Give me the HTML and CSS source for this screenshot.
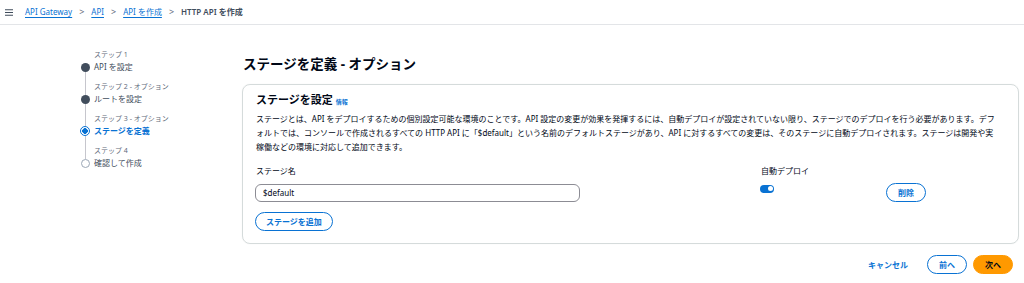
FILE: index.html
```html
<!DOCTYPE html>
<html lang="ja">
  <head>
    <meta charset="UTF-8" />
    <meta name="viewport" content="width=device-width, initial-scale=1.0" />
    <title>HTTP API を作成</title>
    <link rel="stylesheet" href="styles.css">
  </head>
  <body>
    <header class="topbar">
      <span class="menu-icon">
        <svg width="8" height="7" viewBox="0 0 8 7">
          <path d="M0 0.75H8M0 3.5H8M0 6.25H8" stroke="#414d5c" stroke-width="1.2" />
        </svg>
      </span>
      <nav class="breadcrumb">
        <a href="#">API Gateway</a>
        <span class="sep">&gt;</span>
        <a href="#">API</a>
        <span class="sep">&gt;</span>
        <a href="#">API を作成</a>
        <span class="sep">&gt;</span>
        <span class="current">HTTP API を作成</span>
      </nav>
    </header>

    <div class="layout">
      <ol class="steps">
        <li class="step done">
          <span class="rail"><i class="seg top"></i><i class="dot"></i><i class="seg bottom"></i></span>
          <span class="step-label">ステップ 1</span>
          <span class="step-title">API を設定</span>
        </li>
        <li class="step done">
          <span class="rail"><i class="seg top"></i><i class="dot"></i><i class="seg bottom"></i></span>
          <span class="step-label">ステップ 2 - オプション</span>
          <span class="step-title">ルートを設定</span>
        </li>
        <li class="step active">
          <span class="rail"><i class="seg top"></i><i class="dot"></i><i class="seg bottom"></i></span>
          <span class="step-label">ステップ 3 - オプション</span>
          <span class="step-title">ステージを定義</span>
        </li>
        <li class="step todo">
          <span class="rail"><i class="seg top"></i><i class="dot"></i><i class="seg bottom"></i></span>
          <span class="step-label">ステップ 4</span>
          <span class="step-title">確認して作成</span>
        </li>
      </ol>

      <main class="content">
        <h1>ステージを定義 - オプション</h1>

        <section class="card">
          <h2>ステージを設定 <a href="#" class="info">情報</a></h2>
          <p class="desc">
            ステージとは、API をデプロイするための個別設定可能な環境のことです。API 設定の変更が効果を発揮するには、自動デプロイが設定されていない限り、ステージでのデプロイを行う必要があります。デフォルトでは、コンソールで作成されるすべての HTTP API に「$default」という名前のデフォルトステージがあり、API に対するすべての変更は、そのステージに自動デプロイされます。ステージは開発や実稼働などの環境に対応して追加できます。
          </p>

          <div class="stage-grid">
            <label class="field-label" for="stage">ステージ名</label>
            <span class="field-label">自動デプロイ</span>
            <span></span>

            <input id="stage" class="text-input" type="text" value="$default" />
            <span class="toggle"><i></i></span>
            <button class="btn">削除</button>

            <button class="btn add">ステージを追加</button>
          </div>
        </section>

        <div class="actions">
          <button class="btn link">キャンセル</button>
          <button class="btn">前へ</button>
          <button class="btn primary">次へ</button>
        </div>
      </main>
    </div>
  </body>
</html>
```

FILE: styles.css
```css
* {
  box-sizing: border-box;
  margin: 0;
  padding: 0;
}

body {
  font-family: "Noto Sans", "Noto Sans CJK JP", sans-serif;
  color: #000716;
  background: #ffffff;
  font-size: 8px;
}

a {
  color: #0972d3;
}

/* top bar */
.topbar {
  height: 25px;
  display: flex;
  align-items: center;
  border-bottom: 1px solid #e3e5e8;
  padding-left: 5px;
}

.menu-icon {
  display: flex;
  width: 20px;
}

.breadcrumb {
  display: flex;
  align-items: center;
  font-size: 8px;
  line-height: 12px;
}

.breadcrumb a {
  text-decoration: underline;
  text-underline-offset: 2px;
}

.breadcrumb .sep {
  color: #5f6b7a;
  margin: 0 7px;
  font-size: 9px;
}

.breadcrumb .current {
  color: #414d5c;
  font-weight: 600;
}

/* layout */
.layout {
  display: flex;
  padding: 24px 5px 0 80px;
}

/* steps */
.steps {
  list-style: none;
  width: 162px;
  flex-shrink: 0;
}

.step {
  display: grid;
  grid-template-columns: 10px 1fr;
  grid-template-rows: 12px 12px 8px;
  column-gap: 4px;
}

.rail {
  grid-column: 1;
  grid-row: 1 / 4;
  display: flex;
  flex-direction: column;
  align-items: center;
}

.seg {
  width: 1px;
  background: #c6c6cd;
}

.seg.top {
  flex: 1;
}

.seg.bottom {
  height: 9px;
}

.step:first-child .seg.top,
.step:last-child .seg.bottom {
  background: transparent;
}

.dot {
  width: 9px;
  height: 9px;
  border-radius: 50%;
  flex-shrink: 0;
}

.done .dot {
  background: #414d5c;
}

.active .dot {
  width: 10px;
  height: 10px;
  border: 1.5px solid #0972d3;
  background: radial-gradient(circle, #0972d3 2.6px, #ffffff 3px);
}

.todo .dot {
  border: 1px solid #9ba7b6;
  background: #ffffff;
}

.step-label {
  grid-column: 2;
  grid-row: 1;
  font-size: 7px;
  line-height: 12px;
  color: #5f6b7a;
}

.step-title {
  grid-column: 2;
  grid-row: 2;
  font-size: 8px;
  line-height: 12px;
  color: #414d5c;
}

.active .step-title {
  color: #0972d3;
  font-weight: 700;
}

/* content */
.content {
  flex: 1;
}

h1 {
  font-size: 13.5px;
  line-height: 18px;
  font-weight: 700;
  margin: 6px 0 11px 1px;
}

.card {
  border: 1px solid #d5dbdb;
  border-radius: 8px;
  padding: 7px 14px 12px 12px;
  box-shadow: 0 0 1px rgba(0, 7, 22, 0.1);
}

h2 {
  font-size: 11px;
  line-height: 16px;
  font-weight: 700;
  margin-left: 1px;
}

.info {
  font-size: 6px;
  font-weight: 700;
  text-decoration: none;
}

.desc {
  max-width: 745px;
  font-size: 8px;
  line-height: 14px;
  margin: 2px 0 0 1px;
  color: #000716;
}

.stage-grid {
  display: grid;
  grid-template-columns: 505px 126px auto;
  justify-items: start;
  align-items: center;
  margin-top: 11px;
  row-gap: 6px;
}

.field-label {
  font-size: 8px;
  line-height: 12px;
  margin-left: 1px;
}

.text-input {
  width: 325px;
  height: 18px;
  border: 1px solid #8c8c94;
  border-radius: 6px;
  padding: 0 7px;
  font-family: inherit;
  font-size: 8px;
  color: #000716;
}

.toggle {
  width: 14px;
  height: 8px;
  border-radius: 4px;
  background: #0972d3;
  display: flex;
  justify-content: flex-end;
  align-items: center;
  padding-right: 1.5px;
  margin-bottom: 8px;
}

.toggle i {
  width: 5px;
  height: 5px;
  border-radius: 50%;
  background: #ffffff;
}

.btn {
  height: 19px;
  padding: 0 11px;
  border: 1.5px solid #0972d3;
  border-radius: 10px;
  background: #ffffff;
  color: #0972d3;
  font-family: inherit;
  font-size: 8px;
  font-weight: 700;
  cursor: pointer;
}

.add {
  grid-column: 1;
  margin-top: 4px;
  padding: 0 10px;
}

.actions {
  display: flex;
  justify-content: flex-end;
  gap: 6px;
  margin-top: 11px;
  padding-right: 6px;
}

.btn.link {
  border-color: transparent;
  padding: 0 12px 0 0;
}

.btn.primary {
  background: #ff9900;
  border-color: #ff9900;
  color: #000716;
}
```
